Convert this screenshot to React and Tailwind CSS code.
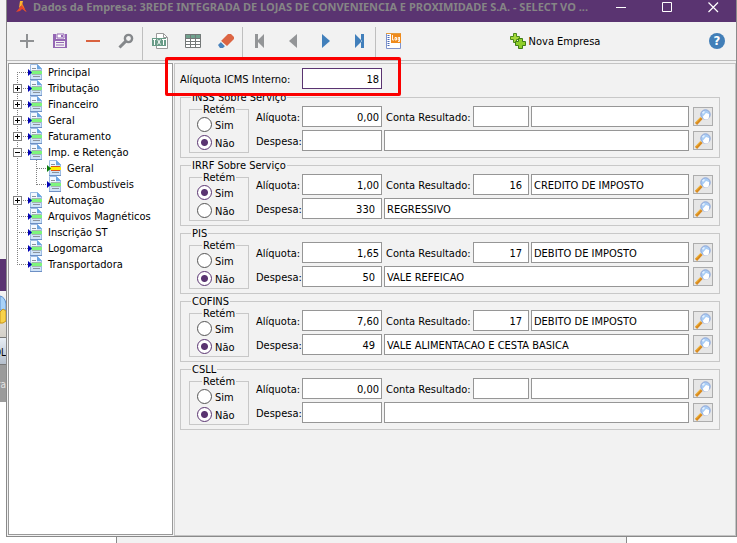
import { Fragment } from 'react';

const TREE = [
  { label: 'Principal' },
  { label: 'Tributação', expander: '+' },
  { label: 'Financeiro', expander: '+' },
  { label: 'Geral', expander: '+' },
  { label: 'Faturamento', expander: '+' },
  { label: 'Imp. e Retenção', expander: '-' },
  { label: 'Geral', child: true, selected: true },
  { label: 'Combustíveis', child: true, lastChild: true },
  { label: 'Automação', expander: '+' },
  { label: 'Arquivos Magnéticos' },
  { label: 'Inscrição ST' },
  { label: 'Logomarca' },
  { label: 'Transportadora' },
];

const TAXES = [
  { id: 'inss', title: 'INSS Sobre Serviço', retain: false, rate: '0,00', account: '', accountName: '', expense: '', expenseName: '' },
  { id: 'irrf', title: 'IRRF Sobre Serviço', retain: true, rate: '1,00', account: '16', accountName: 'CREDITO DE IMPOSTO', expense: '330', expenseName: 'REGRESSIVO' },
  { id: 'pis', title: 'PIS', retain: false, rate: '1,65', account: '17', accountName: 'DEBITO DE IMPOSTO', expense: '50', expenseName: 'VALE REFEICAO' },
  { id: 'cofins', title: 'COFINS', retain: false, rate: '7,60', account: '17', accountName: 'DEBITO DE IMPOSTO', expense: '49', expenseName: 'VALE ALIMENTACAO E CESTA BASICA' },
  { id: 'csll', title: 'CSLL', retain: false, rate: '0,00', account: '', accountName: '', expense: '', expenseName: '' },
];

const TOOLS = [
  [
    { label: 'Adicionar', icon: <path d="M8 1v14M1 8h14" stroke="#8f9193" strokeWidth="2" /> },
    {
      label: 'Salvar',
      icon: (
        <>
          <path d="M1 1h3v5h9V1h2v14H1z" fill="#9467b4" />
          <path d="M5 1h7v4H5z" fill="#fff" stroke="#9467b4" />
          <path d="M9 2h2v2H9z" fill="#9467b4" />
          <path d="M3 8h10v6H3z" fill="#f2f2f2" />
          <path d="M4 9.5h8M4 12h8" stroke="#9467b4" />
        </>
      ),
    },
    { label: 'Excluir', icon: <path d="M1 8h14" stroke="#d9623f" strokeWidth="2" /> },
    {
      label: 'Pesquisar',
      icon: (
        <g fill="none" stroke="#85888b">
          <circle cx="10.5" cy="5.5" r="3.6" strokeWidth="2.4" />
          <path d="M7.6 8.4 1.5 14.5" strokeWidth="3" />
        </g>
      ),
    },
  ],
  [
    {
      label: 'Exportar TXT',
      icon: (
        <>
          <path d="M4.5 5V.5h7l4 4v11h-11V13" fill="#fff" stroke="#9a9a9a" />
          <path d="M11.5.5v4h4" fill="none" stroke="#9a9a9a" />
          <path d="M0 5h14v8H0z" fill="#6a9c88" />
          <path d="M1 6.5h3M2.5 6.5V12M9.500 6.5h4M11.500 6.5V12" stroke="#fff" fill="none" shapeRendering="crispEdges" />
          <path d="m5.500 6.500 3 5M8.500 6.500l-3 5" stroke="#fff" />
        </>
      ),
    },
    {
      label: 'Tabela',
      icon: (
        <>
          <path d="M.5 1.5h15v13H.5z" fill="#fff" />
          <path d="M0 1h16v4H0z" fill="#6fa18d" />
          <path d="M.5 1.5h15v13H.5zM.5 5.5h15M.5 8.5h15M.5 11.5h15M5.5 1.5v13M10.5 1.5v13" fill="none" stroke="#747878" />
        </>
      ),
    },
    {
      label: 'Limpar',
      icon: (
        <>
          <path d="M10 1h3l3 3v2l-7 7-6-5z" fill="#dc6543" />
          <path d="m3 9 4 4-2 2H2l-2-3z" fill="#4a83bd" />
          <path d="m2.500 8 6 6" stroke="#f2f2f2" />
        </>
      ),
    },
  ],
  [
    { label: 'Primeiro', icon: <path d="M3 1h3v14H3zM12 1v14L5 8z" fill="#939597" /> },
    { label: 'Anterior', icon: <path d="M12 1v14L4 8z" fill="#939597" /> },
    { label: 'Próximo', icon: <path d="M4 1v14l8-7z" fill="#417fbb" /> },
    { label: 'Último', icon: <path d="M4 1v14l7-7zM10 1h3v14h-3z" fill="#417fbb" /> },
  ],
  [
    {
      label: 'Log',
      icon: (
        <>
          <path d="M1.500.5h14v15h-14z" fill="#fff" stroke="#7f93cc" />
          <path d="M1 .5h15" stroke="#e59a3c" />
          <path d="M3.500 2v12" stroke="#4969b5" strokeWidth="2" strokeDasharray="1 1" />
          <path d="M6 1h10v9H6z" fill="#ef8a1c" />
          <path d="M7.500 2v5H9M10 4.500h1.500V7H10zM15 4.500h-1.800V7H14.500M14.500 4.500v4H13" fill="none" stroke="#fff" strokeWidth="0.900" />
        </>
      ),
    },
  ],
];

function Icon({ children }) {
  return (
    <svg viewBox="0 0 16 16" className="w-4 h-4 shrink-0" aria-hidden="true">
      {children}
    </svg>
  );
}

function TitleBar() {
  return (
    <header className="flex items-center h-[22px] pb-2 pl-[9px] bg-[#5a3471]">
      <svg viewBox="0 0 11 12" className="w-[11px] h-3 shrink-0" aria-hidden="true">
        <path d="M4 0h3l-1 4-3 3z" fill="#ffb52e" />
        <path d="M6 2 5 6l5 5-2-5z" fill="#f47a20" />
        <path d="M5 5 0 11l4-1 2-2 5 3-5-6z" fill="#e8452c" />
      </svg>
      <h1 className="flex-1 min-w-0 ml-[6px] font-['Noto_Sans',sans-serif] font-bold text-[#858585] whitespace-nowrap">
        Dados da Empresa: 3REDE INTEGRADA DE LOJAS DE CONVENIENCIA E PROXIMIDADE S.A. - SELECT VO ...
      </h1>
      <div className="flex shrink-0">
        <button aria-label="Minimizar" className="w-[46px] flex justify-center">
          <svg viewBox="0 0 11 11" className="w-[11px] h-[11px]"><path d="M0 5.500h10" stroke="#fff" /></svg>
        </button>
        <button aria-label="Maximizar" className="w-[46px] flex justify-center">
          <svg viewBox="0 0 11 11" className="w-[11px] h-[11px]"><path d="M.5.5h9v9h-9z" fill="none" stroke="#fff" /></svg>
        </button>
        <button aria-label="Fechar" className="w-[46px] flex justify-center">
          <svg viewBox="0 0 11 11" className="w-[11px] h-[11px]"><path d="m.5.5 9.500 9.500M10 .5.5 10" stroke="#fff" strokeWidth="1.200" /></svg>
        </button>
      </div>
    </header>
  );
}

function Toolbar() {
  return (
    <div role="toolbar" className="flex items-center h-[39px] pl-[3px] pr-[11px] border-b border-[#bcbcbc]">
      {TOOLS.map((group, i) => (
        <Fragment key={i}>
          {i > 0 && <span className="w-px h-[33px] mt-1 bg-[#bfbfbf]" />}
          {group.map((tool) => (
            <button key={tool.label} aria-label={tool.label} className="flex items-center justify-center w-[33px] h-8">
              <Icon>{tool.icon}</Icon>
            </button>
          ))}
        </Fragment>
      ))}
      <div className="flex-1 flex justify-center pr-2">
        <button className="flex items-center gap-[3px] whitespace-nowrap">
          <Icon>
            <path d="M3.500.5h3v3h3v3h-3v3h-3v-3h-3v-3h3z" fill="#a5d83a" stroke="#4c8a1c" />
            <path d="M8.500 5.500h4v3h3v4h-3v3h-4v-3h-3v-4h3z" fill="#8fce2a" stroke="#3f7d16" />
          </Icon>
          <span className="pt-[2px]">Nova Empresa</span>
        </button>
      </div>
      <button aria-label="Ajuda" className="flex items-center justify-center w-4 h-4 rounded-full bg-[#427fb8] text-white text-[13px] font-bold">
        ?
      </button>
    </div>
  );
}

function PageIcon({ selected }) {
  return (
    <Icon>
      <path d="M3.500.5h7l4 4v11h-11z" fill="#cfe3f8" stroke="#9dbce3" />
      <path d="M4 1h6v5H4z" fill="#f4f9ff" />
      <path d="M10 0l5 5h-5z" fill="#6aa5e2" />
      <path d="M3 15.500h12" stroke="#6d8fc4" />
      <path d="M5 4.500h4M6 12.500h7" stroke="#8a929c" />
      <path d="M4 7h11v3H4z" fill={selected ? '#ffee00' : '#7df57d'} />
      <path d="M5 6.500h9M5 10.500h9" stroke={selected ? '#d8541e' : '#a3b5b0'} />
      <path d="m1 5 4 3.500L1 12z" fill={selected ? '#0a7a0a' : '#0000b4'} />
    </Icon>
  );
}

function TreeItem({ item, first, last }) {
  return (
    <li className="relative flex items-center h-4">
      <svg viewBox="0 0 38 16" className="absolute left-0 top-0 w-[38px] h-4" aria-hidden="true">
        <g stroke="#808080" strokeDasharray="1 1">
          <path d={`M8.500 ${first ? 8 : 0}V${last ? 9 : 16}`} />
          {item.child ? (
            <>
              <path d={`M27.500 0V${item.lastChild ? 9 : 16}`} />
              <path d="M28 8.500h10" />
            </>
          ) : (
            <path d="M8 8.500h11" />
          )}
        </g>
      </svg>
      <span className={item.child ? 'w-[37px] shrink-0' : 'w-[18px] shrink-0 flex pl-1'}>
        {item.expander && (
          <button
            aria-label={item.expander === '+' ? `Expandir ${item.label}` : `Recolher ${item.label}`}
            className="relative w-[9px] h-[9px] mt-px bg-white border border-[#808080]"
          >
            <svg viewBox="0 0 7 7" className="w-[7px] h-[7px]">
              <path d={item.expander === '+' ? 'M1 3.500h5M3.500 1v5' : 'M1 3.500h5'} stroke="#000" />
            </svg>
          </button>
        )}
      </span>
      <span className="relative flex items-center gap-[5px] whitespace-nowrap">
        <PageIcon selected={item.selected} />
        <span className="pt-[2px]">{item.label}</span>
      </span>
    </li>
  );
}

function Field({ active, className = '', ...props }) {
  return (
    <input
      type="text"
      className={`h-[21px] bg-white border ${active ? 'border-[#5a3471]' : 'border-[#969696]'} pl-[2px] pt-[2px] text-black outline-none ${className}`}
      {...props}
    />
  );
}

function SearchButton({ label }) {
  return (
    <button aria-label={label} className="flex items-center justify-center shrink-0 ml-1 w-5 h-[19px] bg-[#e6e6e6] border border-[#adadad]">
      <Icon>
        <path d="m1 15 5.500-6" stroke="#d98a1e" strokeWidth="3" />
        <path d="m1 13.500 5-5.500" stroke="#f6c44c" />
        <circle cx="10.500" cy="5.500" r="4.700" fill="#a9cdf5" stroke="#8fa5d6" />
        <path d="M8 7.500a3 3 0 0 0 6 0V5l-3-1z" fill="#fff" />
        <path d="M7 3.500 9 2l1 1-2 2z" fill="#e4f1ff" />
      </Icon>
    </button>
  );
}

function RetainOption({ name, label, checked }) {
  return (
    <label className="flex items-center gap-[3px] h-[15px]">
      <input
        type="radio"
        name={name}
        defaultChecked={checked}
        className="appearance-none w-[15px] h-[15px] shrink-0 rounded-full bg-white border border-[#555] checked:border-[#5a3471] checked:bg-[radial-gradient(circle,#5a3471_0,#5a3471_3px,#fff_4px)]"
      />
      <span className="pt-[2px]">{label}</span>
    </label>
  );
}

function TaxGroup({ tax }) {
  return (
    <fieldset className="min-w-0 border border-[#c8c8c8] pl-2 pr-[6px] pb-1">
      <legend className="h-3 leading-[14px] ml-[2px] px-px">{tax.title}</legend>
      <div className="flex">
        <fieldset className="w-[60px] shrink-0 border border-[#c8c8c8] pl-[7px] pb-[2px]">
          <legend className="h-3 leading-[14px] ml-[5px] px-px">Retém</legend>
          <div className="flex flex-col gap-[3px] pt-[2px]">
            <RetainOption name={`${tax.id}-retem`} label="Sim" checked={tax.retain} />
            <RetainOption name={`${tax.id}-retem`} label="Não" checked={!tax.retain} />
          </div>
        </fieldset>
        <div className="flex-1 min-w-0 flex flex-col gap-[3px] pt-[3px] pl-[7px]">
          <div className="flex items-center">
            <label htmlFor={`${tax.id}-rate`} className="w-[46px] pt-[2px] shrink-0 whitespace-nowrap">Alíquota:</label>
            <Field id={`${tax.id}-rate`} defaultValue={tax.rate} className="w-20 shrink-0 pr-[2px] text-right" />
            <label htmlFor={`${tax.id}-account`} className="w-[87px] pt-[2px] pl-1 shrink-0 whitespace-nowrap">Conta Resultado:</label>
            <Field id={`${tax.id}-account`} defaultValue={tax.account} className="w-14 shrink-0 ml-1 pr-[6px] text-right" />
            <Field aria-label="Descrição da conta" defaultValue={tax.accountName} className="flex-1 min-w-0 ml-[2px]" />
            <SearchButton label="Pesquisar conta" />
          </div>
          <div className="flex items-center">
            <label htmlFor={`${tax.id}-expense`} className="w-[46px] pt-[2px] shrink-0 whitespace-nowrap">Despesa:</label>
            <Field id={`${tax.id}-expense`} defaultValue={tax.expense} className="w-20 shrink-0 pr-[6px] text-right" />
            <Field aria-label="Descrição da despesa" defaultValue={tax.expenseName} className="flex-1 min-w-0 ml-[2px]" />
            <SearchButton label="Pesquisar despesa" />
          </div>
        </div>
      </div>
    </fieldset>
  );
}

function BackgroundEdge() {
  return (
    <div className="w-[6px] shrink-0 flex flex-col overflow-hidden bg-white" aria-hidden="true">
      <div className="h-[259px] bg-[#f2f2f2]" />
      <div className="h-8 bg-[#5a3471]" />
      <div className="h-[46px] pt-1 bg-gradient-to-b from-[#f5f5f5] to-[#d4d0c8]">
        <svg viewBox="0 0 6 30" className="w-[6px] h-[30px]">
          <path d="M0 1q5 1 6 8v6H0z" fill="#a9d2f7" stroke="#5b8fcf" />
          <path d="M0 17l3-3 3 2v10q-3 3-6 2z" fill="#f8d24a" stroke="#c9961a" />
        </svg>
      </div>
      <div className="h-[28px] border-y border-[#777] bg-gradient-to-b from-[#e8eef5] to-[#b5bfcc] leading-[30px] text-[10px]">
        <span className="flex justify-end">QL</span>
      </div>
      <div className="h-[37px] bg-[#9b9b9b] leading-[40px] text-[10px] text-[#e4e4e4]">
        <span className="flex justify-end">ra</span>
      </div>
    </div>
  );
}

export default function App() {
  return (
    <div className="flex flex-col h-screen bg-white overflow-hidden font-['DejaVu_Sans_Condensed','DejaVu_Sans',sans-serif] text-[11px] leading-[14px] text-black">
      <div className="flex flex-1 min-h-0">
        <BackgroundEdge />
        <main className="relative flex-1 min-w-0 flex flex-col bg-[#f2f2f2] border-x border-b border-[#8a8a8a]">
          <TitleBar />
          <Toolbar />
          <div className="flex flex-1 min-h-0 gap-px pt-[2px] pl-px">
            <nav className="w-[165px] shrink-0 mb-px bg-white border border-[#999]">
              <ul>
                {TREE.map((item, i) => (
                  <TreeItem key={i} item={item} first={i === 0} last={i === TREE.length - 1} />
                ))}
              </ul>
            </nav>
            <section className="flex-1 min-w-0 border border-[#c4c4c4] pl-[5px] pr-[15px] pt-1">
              <div className="flex items-center mb-[2px]">
                <label htmlFor="icms" className="w-[122px] pt-[2px] shrink-0 whitespace-nowrap">Alíquota ICMS Interno:</label>
                <Field id="icms" active defaultValue="18" className="w-20 pr-[2px] text-right" />
              </div>
              <div className="flex flex-col gap-px">
                {TAXES.map((tax) => (
                  <TaxGroup key={tax.id} tax={tax} />
                ))}
              </div>
            </section>
          </div>
          <div className="absolute left-[158px] top-[57px] w-[236px] h-[39px] border-[3px] border-[#fb0000] rounded-[2px] pointer-events-none" />
        </main>
      </div>
      <div className="h-[6px] shrink-0 ml-[116px] mr-[110px] bg-[#f2f2f2] border-x border-[#8a8a8a]" />
    </div>
  );
}
